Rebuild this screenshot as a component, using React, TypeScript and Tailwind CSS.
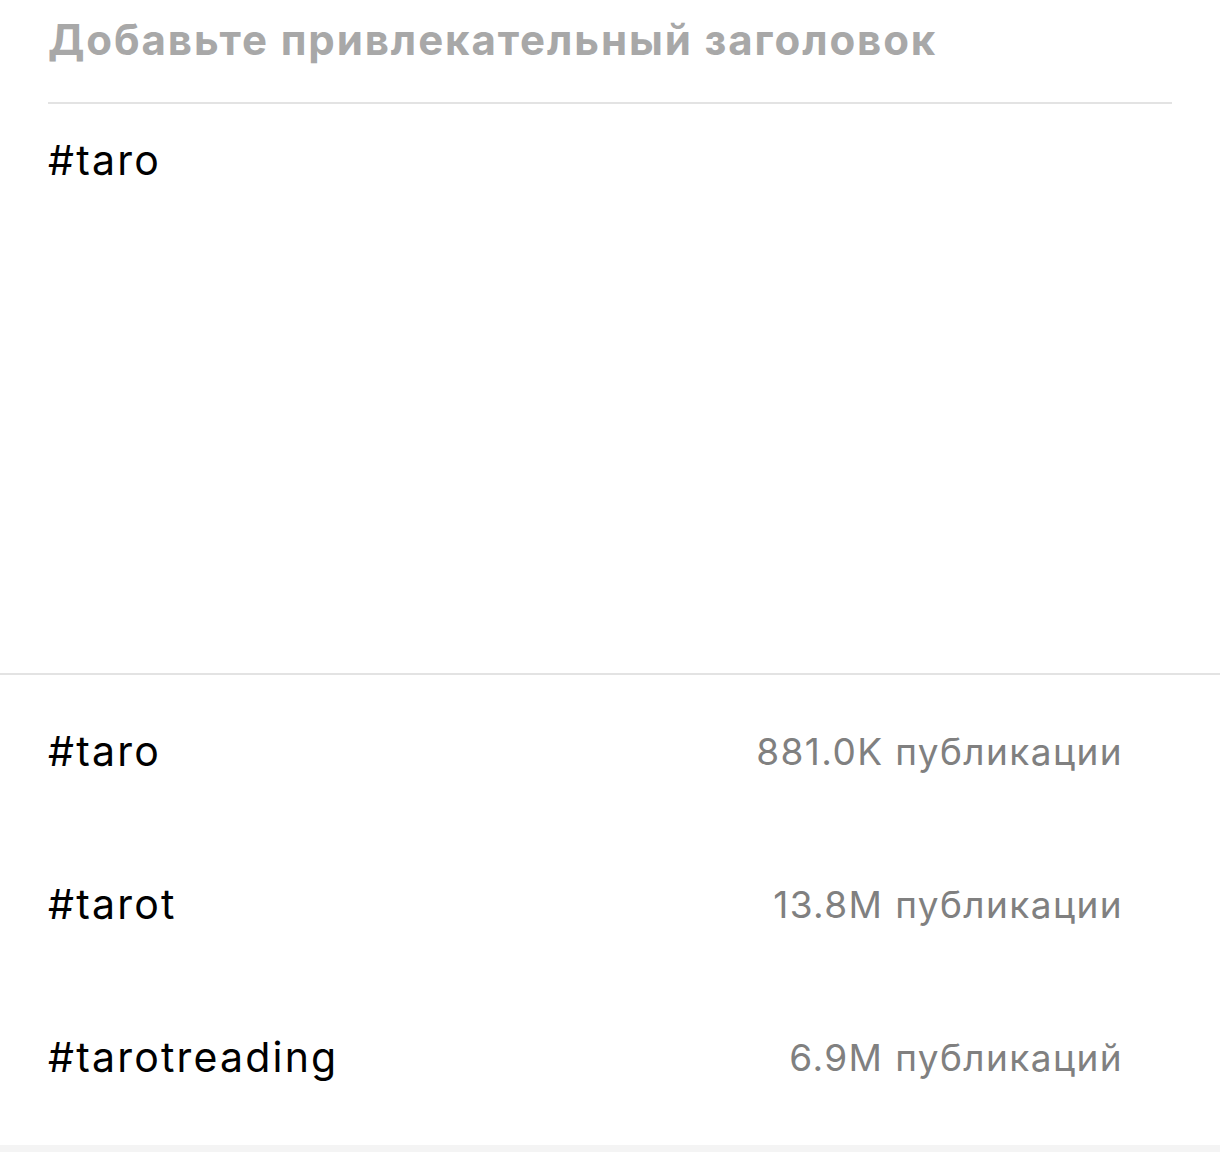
const tags = [
  { tag: "#taro", count: "881.0K публикации" },
  { tag: "#tarot", count: "13.8M публикации" },
  { tag: "#tarotreading", count: "6.9M публикаций" },
];

export default function App() {
  return (
    <div className="w-[1220px] h-[1152px] bg-white flex flex-col font-['Inter','Noto_Sans',sans-serif] overflow-hidden">
      <div className="px-12 flex flex-col">
        <div className="h-[78px] flex items-center text-[42px] font-bold text-[#a8a8a8] tracking-[1.9px]">
          Добавьте привлекательный заголовок
        </div>
        <div className="h-[2px] bg-[#e3e3e3] mt-[24px]" />
        <div className="h-[569px] pt-[36px] text-[41px] text-black leading-none tracking-[2.2px]">#taro</div>
      </div>
      <div className="h-[2px] bg-[#e3e3e3]" />
      <div className="flex-1 flex flex-col">
        {tags.map((t) => (
          <div key={t.tag} className="h-[153px] flex items-center justify-between pl-12 pr-[97px]">
            <span className="text-[41px] text-black tracking-[2.2px]">{t.tag}</span>
            <span className="text-[37px] text-[#808080] tracking-[1.4px]">{t.count}</span>
          </div>
        ))}
      </div>
      <div className="h-[7px] bg-[#f4f4f4]" />
    </div>
  );
}
